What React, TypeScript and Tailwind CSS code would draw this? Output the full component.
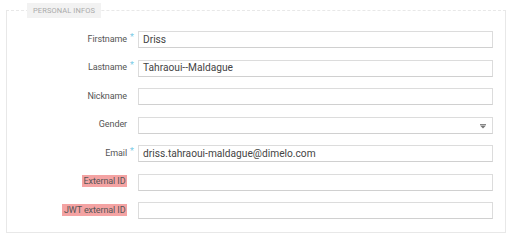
import React from "react";

const rows: { label: string; req?: boolean; value?: string; select?: boolean; hl?: boolean }[] = [
  { label: "Firstname", req: true, value: "Driss" },
  { label: "Lastname", req: true, value: "Tahraoui--Maldague" },
  { label: "Nickname" },
  { label: "Gender", select: true },
  { label: "Email", req: true, value: "driss.tahraoui-maldague@dimelo.com" },
  { label: "External ID", hl: true },
  { label: "JWT external ID", hl: true },
];

export default function App() {
  return (
    <div className="w-[512px] h-[239px] bg-white pt-[3px] px-[6px]" style={{ fontFamily: "Roboto, 'Liberation Sans', sans-serif" }}>
      <fieldset className="w-[500px] border border-[#e8e8e8] [border-top-style:dashed] pb-[13px]">
        <legend className="ml-[20px] bg-[#f2f2f2] px-[6px] h-[15px] leading-[15px] text-[7.5px] text-[#aaa] uppercase tracking-[0.1px]">
          Personal infos
        </legend>
        <div className="flex flex-col gap-[11.5px] pt-[13px]">
          {rows.map((r) => (
            <div key={r.label} className="flex items-center h-[17px]">
              <div className="w-[120px] flex justify-end">
                <span className="relative text-[9px] text-[#555] tracking-[-0.1px]">
                  <span className={r.hl ? "bg-[#f4a3a3] px-[1.5px] py-[1px]" : ""}>{r.label}</span>
                  {r.req && (
                    <span className="absolute left-full top-[-2px] ml-[3px] text-[9px] text-[#7ccbe6]">*</span>
                  )}
                </span>
              </div>
              <div className="ml-[11px] w-[355px] h-[17px] border border-[#dcdcdc] border-b-[#d0d0d0] flex items-center px-[4px] text-[10.2px] text-[#444] relative">
                {r.value}
                {r.select && (
                  <svg className="absolute right-[6px] top-[6px]" width="6" height="5" viewBox="0 0 6 5">
                    <rect x="0" y="0" width="6" height="1" fill="#888" />
                    <path d="M0 1.5 L6 1.5 L3 4.5 Z" fill="#777" />
                  </svg>
                )}
              </div>
            </div>
          ))}
        </div>
      </fieldset>
    </div>
  );
}
